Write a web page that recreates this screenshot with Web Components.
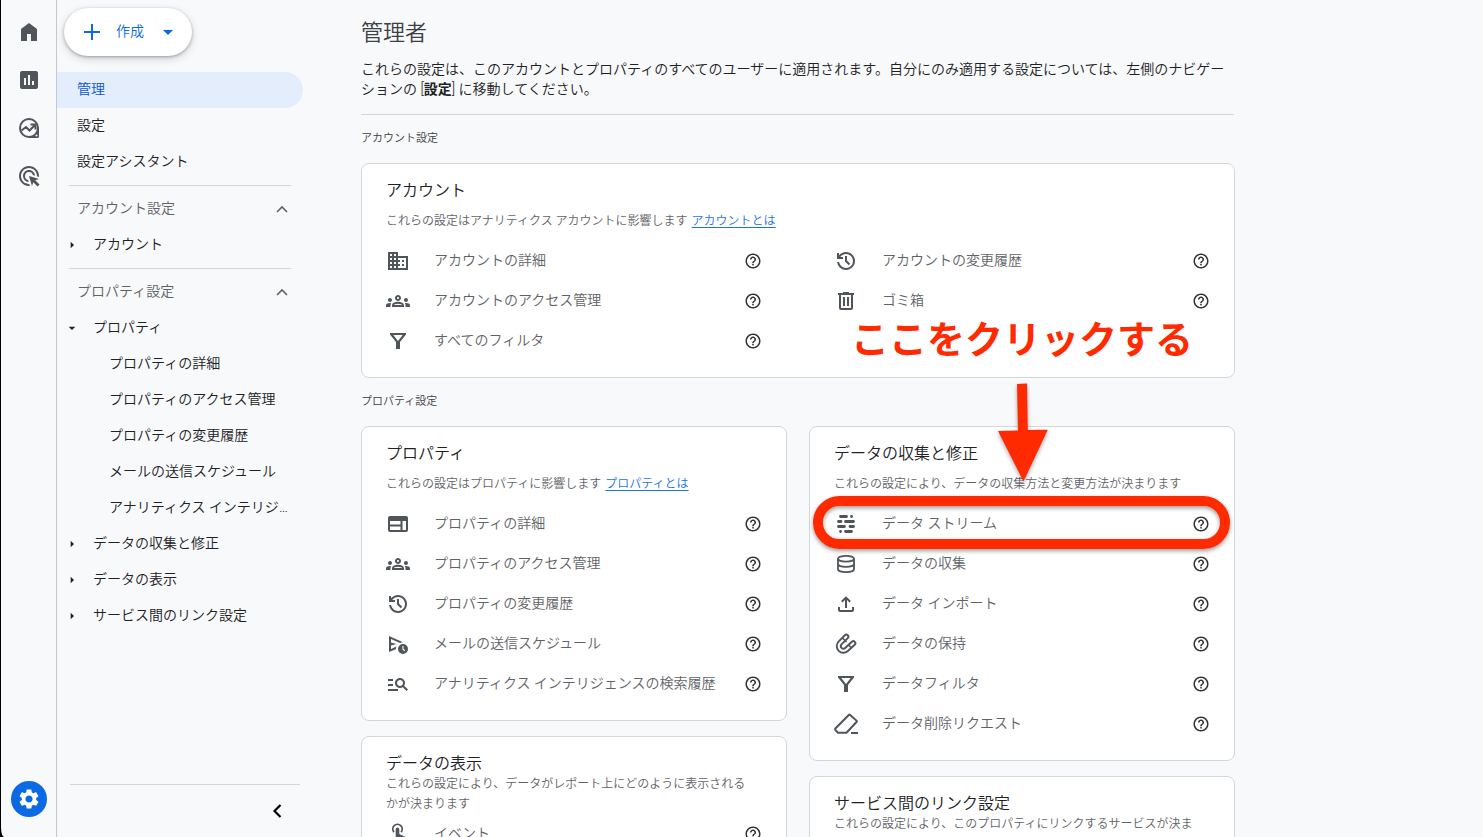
<!DOCTYPE html>
<html lang="ja">
<head>
<meta charset="utf-8">
<meta name="viewport" content="width=device-width, initial-scale=1">
<title>管理者</title>
<style>
  :root {
    --bg: #f8f9fb;
    --line: #d3d6da;
    --ink: #202124;
    --ink-2: #3c4043;
    --muted: #5f6368;
    --icon: #50555b;
    --blue: #1a73e8;
    --blue-strong: #0b6ae3;
    --red: #ff2a00;
  }
  html, body { height: 100%; margin: 0; }
  body {
    background: #000;
    color: var(--ink-2);
    font: 350 14px/20px Roboto, "Noto Sans CJK JP", sans-serif;
    overflow: hidden;
  }
</style>
</head>
<body>
<analytics-shell>
  <icon-rail slot="rail"></icon-rail>

  <side-nav slot="nav">
    <nav-item current>管理</nav-item>
    <nav-item>設定</nav-item>
    <nav-item>設定アシスタント</nav-item>
    <nav-group label="アカウント設定">
      <nav-item branch="closed">アカウント</nav-item>
    </nav-group>
    <nav-group label="プロパティ設定">
      <nav-item branch="open">プロパティ</nav-item>
      <nav-item nested>プロパティの詳細</nav-item>
      <nav-item nested>プロパティのアクセス管理</nav-item>
      <nav-item nested>プロパティの変更履歴</nav-item>
      <nav-item nested>メールの送信スケジュール</nav-item>
      <nav-item nested>アナリティクス インテリジェンスの検索履歴</nav-item>
      <nav-item branch="closed">データの収集と修正</nav-item>
      <nav-item branch="closed">データの表示</nav-item>
      <nav-item branch="closed">サービス間のリンク設定</nav-item>
    </nav-group>
  </side-nav>

  <admin-page>
    <page-header slot="header" heading="管理者">これらの設定は、このアカウントとプロパティのすべてのユーザーに適用されます。自分にのみ適用する設定については、左側のナビゲーションの [<b>設定</b>] に移動してください。</page-header>

    <settings-card slot="account" heading="アカウント" columns="2">
      <span slot="about">これらの設定はアナリティクス アカウントに影響します</span>
      <text-link slot="about">アカウントとは</text-link>
      <setting-row icon="domain">アカウントの詳細</setting-row>
      <setting-row icon="groups">アカウントのアクセス管理</setting-row>
      <setting-row icon="filter">すべてのフィルタ</setting-row>
      <setting-row icon="history">アカウントの変更履歴</setting-row>
      <setting-row icon="trash">ゴミ箱</setting-row>
    </settings-card>

    <settings-card slot="left" heading="プロパティ">
      <span slot="about">これらの設定はプロパティに影響します</span>
      <text-link slot="about">プロパティとは</text-link>
      <setting-row icon="web">プロパティの詳細</setting-row>
      <setting-row icon="groups">プロパティのアクセス管理</setting-row>
      <setting-row icon="history">プロパティの変更履歴</setting-row>
      <setting-row icon="schedule">メールの送信スケジュール</setting-row>
      <setting-row icon="search">アナリティクス インテリジェンスの検索履歴</setting-row>
    </settings-card>
    <settings-card slot="left" heading="データの表示">
      <span slot="about">これらの設定により、データがレポート上にどのように表示されるかが決まります</span>
      <setting-row icon="touch">イベント</setting-row>
    </settings-card>

    <settings-card slot="right" heading="データの収集と修正">
      <span slot="about">これらの設定により、データの収集方法と変更方法が決まります</span>
      <setting-row icon="stream" marked>データ ストリーム</setting-row>
      <setting-row icon="database">データの収集</setting-row>
      <setting-row icon="upload">データ インポート</setting-row>
      <setting-row icon="magnet">データの保持</setting-row>
      <setting-row icon="filter">データフィルタ</setting-row>
      <setting-row icon="eraser">データ削除リクエスト</setting-row>
    </settings-card>
    <settings-card slot="right" heading="サービス間のリンク設定">
      <span slot="about">これらの設定により、このプロパティにリンクするサービスが決まります</span>
    </settings-card>

    <callout-note slot="note">ここをクリックする</callout-note>
  </admin-page>
</analytics-shell>

<script>
const ICONS = {
  home: '<path d="M4 21V9l8-6 8 6v12h-6v-7h-4v7z"/>',
  chart: '<path d="M19 3H5c-1.1 0-2 .9-2 2v14c0 1.1.9 2 2 2h14c1.1 0 2-.9 2-2V5c0-1.1-.9-2-2-2zM9 17H7v-7h2v7zm4 0h-2V7h2v10zm4 0h-2v-4h2v4z"/>',
  explore: '<path fill-rule="evenodd" d="M12 2a10 10 0 1 0 0 20h8.500a1.500 1.500 0 0 0 1.500-1.500V12A10 10 0 0 0 12 2zm0 2a8 8 0 1 1 0 16 8 8 0 0 1 0-16zm7.500 14.500a1 1 0 1 1 0 2 1 1 0 0 1 0-2z"/><path d="M4.500 14.500l4.500-3.500 3.500 3.500 5-5M13.500 8.500h5v5" fill="none" stroke="currentColor" stroke-width="2"/>',
  ads: '<path d="M11.710 17.990A5.993 5.993 0 0 1 6 12c0-3.310 2.690-6 6-6 3.220 0 5.840 2.530 5.990 5.710l-2.100-.63a3.999 3.999 0 1 0-4.810 4.810l.63 2.100zM22 12c0 .3-.01.6-.04.9l-1.970-.59c.01-.1.01-.21.01-.31 0-4.420-3.580-8-8-8s-8 3.580-8 8 3.580 8 8 8c.1 0 .21 0 .31-.01l.59 1.970c-.3.03-.6.04-.9.04-5.520 0-10-4.480-10-10S6.480 2 12 2s10 4.480 10 10zm-3.770 4.260L22 15l-10-3 3 10 1.260-3.770 4.270 4.270 1.980-1.980-4.280-4.260z"/>',
  gear: '<path d="M19.140 12.940c.04-.3.06-.61.06-.94 0-.32-.02-.64-.07-.94l2.030-1.580c.18-.14.23-.41.12-.61l-1.920-3.320c-.12-.22-.37-.29-.59-.22l-2.390.96c-.5-.38-1.030-.7-1.620-.94l-.36-2.540c-.04-.24-.24-.41-.48-.41h-3.840c-.24 0-.43.17-.47.41l-.36 2.540c-.59.24-1.130.57-1.620.94l-2.390-.96c-.22-.08-.47 0-.59.22L2.740 8.870c-.12.21-.08.47.12.61l2.030 1.580c-.05.3-.09.63-.09.94s.02.64.07.94l-2.030 1.580c-.18.14-.23.41-.12.61l1.920 3.320c.12.22.37.29.59.22l2.390-.96c.5.38 1.030.7 1.620.94l.36 2.540c.05.24.24.41.48.41h3.840c.24 0 .44-.17.47-.41l.36-2.540c.59-.24 1.130-.56 1.620-.94l2.390.96c.22.08.47 0 .59-.22l1.920-3.320c.12-.22.07-.47-.12-.61l-2.010-1.580zM12 15.600c-1.980 0-3.600-1.620-3.600-3.600s1.620-3.600 3.600-3.600 3.600 1.620 3.600 3.600-1.620 3.600-3.600 3.600z"/>',
  plus: '<path d="M4 11h7V4h2v7h7v2h-7v7h-2v-7H4z"/>',
  caret: '<path d="M7 10l5 5 5-5z"/>',
  up: '<path d="M7 15l5-5 5 5" fill="none" stroke="currentColor" stroke-width="1.600"/>',
  back: '<path d="M15.500 6l-6 6 6 6" fill="none" stroke="currentColor" stroke-width="2.200"/>',
  help: '<path d="M11 18h2v-2h-2v2zm1-16C6.480 2 2 6.480 2 12s4.480 10 10 10 10-4.480 10-10S17.520 2 12 2zm0 18c-4.410 0-8-3.590-8-8s3.590-8 8-8 8 3.590 8 8-3.590 8-8 8zm0-14c-2.210 0-4 1.790-4 4h2c0-1.100.9-2 2-2s2 .9 2 2c0 2-3 1.750-3 5h2c0-2.250 3-2.500 3-5 0-2.210-1.790-4-4-4z"/>',
  domain: '<path d="M12 7V3H2v18h20V7H12zM6 19H4v-2h2v2zm0-4H4v-2h2v2zm0-4H4V9h2v2zm0-4H4V5h2v2zm4 12H8v-2h2v2zm0-4H8v-2h2v2zm0-4H8V9h2v2zm0-4H8V5h2v2zm10 12h-8v-2h2v-2h-2v-2h2v-2h-2V9h8v10zm-2-8h-2v2h2v-2zm0 4h-2v2h2v-2z"/>',
  groups: '<path d="M4 13c1.100 0 2-.9 2-2s-.9-2-2-2-2 .9-2 2 .9 2 2 2zm1.130 1.100c-.37-.06-.74-.1-1.130-.1-.99 0-1.930.21-2.780.58A2.010 2.010 0 0 0 0 16.430V18h4.500v-1.610c0-.83.23-1.610.63-2.290zM20 13c1.100 0 2-.9 2-2s-.9-2-2-2-2 .9-2 2 .9 2 2 2zm4 3.430c0-.81-.48-1.530-1.220-1.850A6.950 6.950 0 0 0 20 14c-.39 0-.76.04-1.130.1.4.68.63 1.460.63 2.290V18H24v-1.570zm-7.760-2.780c-1.170-.52-2.610-.9-4.240-.9s-3.070.39-4.240.9A2.988 2.988 0 0 0 6 16.390V18h12v-1.610c0-1.180-.68-2.260-1.760-2.740zM8.070 16c.09-.23.13-.39.91-.69.97-.38 1.990-.56 3.020-.56s2.050.18 3.020.56c.77.3.81.46.91.69H8.070zM12 8c.55 0 1 .45 1 1s-.45 1-1 1-1-.45-1-1 .45-1 1-1m0-2c-1.660 0-3 1.340-3 3s1.340 3 3 3 3-1.340 3-3-1.340-3-3-3z"/>',
  filter: '<path fill-rule="evenodd" d="M4 4h16v1.500L14 13v7h-4v-7L4 5.500zM7.300 6L12 11.900 16.700 6z"/>',
  history: '<path d="M12 21q-3.450 0-6.012-2.287T3.050 13H5.100q.35 2.600 2.313 4.300T12 19q2.925 0 4.963-2.037T19 12t-2.037-4.962T12 5q-1.725 0-3.225.8T6.250 8H9v2H3V4h2v2.350q1.275-1.600 3.113-2.475T12 3q1.875 0 3.513.713t2.850 1.924 1.925 2.850T21 12t-.712 3.513-1.925 2.850-2.850 1.925T12 21m2.800-4.800L11 12.400V7h2v4.600l3.200 3.200z"/>',
  trash: '<path fill-rule="evenodd" d="M4 4h5V3h6v1h5v2h-1v13a2 2 0 0 1-2 2H7a2 2 0 0 1-2-2V6H4zm3 2v13h10V6zm2 2h2v9H9zm4 0h2v9h-2z"/>',
  web: '<path fill-rule="evenodd" d="M4 4h16a2 2 0 0 1 2 2v12a2 2 0 0 1-2 2H4a2 2 0 0 1-2-2V6a2 2 0 0 1 2-2zm0 5v3.500h10.500V9zm0 5.500V18h10.500v-3.500zM16.500 9v9H20V9z"/>',
  schedule: '<path fill-rule="evenodd" d="M3 4l14 6.200a7 7 0 0 0-3 .9L5 7v3.500L10.500 12 5 13.500V17l5.500-2.400a7 7 0 0 0-.7 2.600L3 20z"/><path fill-rule="evenodd" d="M17 12a5 5 0 1 1 0 10 5 5 0 0 1 0-10zm-.6 2v3.300l2 2 .8-.8-1.700-1.700V14z"/>',
  search: '<path d="M7 9H2V7h5v2zm0 3H2v2h5v-2zm13.590 7l-3.830-3.830c-.8.52-1.740.83-2.760.83-2.760 0-5-2.240-5-5s2.240-5 5-5 5 2.240 5 5c0 1.020-.31 1.960-.83 2.750L22 17.590 20.590 19zM17 11c0-1.650-1.350-3-3-3s-3 1.350-3 3 1.350 3 3 3 3-1.350 3-3zM2 19h10v-2H2v2z"/>',
  touch: '<path d="M8 10.200a4.700 4.700 0 1 1 7 0" fill="none" stroke="currentColor" stroke-width="1.800"/><path d="M9.700 7.200a1.800 1.800 0 0 1 3.600 0V12l5.700 2.800-1 7.200h-7L5 16.500 6.500 15l3.200 1z"/>',
  stream: '<path d="M6.500 4.500h6M17.500 4.500h.1M4.500 9.500h2.500M11.500 9.500h8M4.500 14.500h6M16 14.500h3.500M6.500 19.500h.1M11.500 19.500h6" fill="none" stroke="currentColor" stroke-width="2.800" stroke-linecap="round"/>',
  database: '<g fill="none" stroke="currentColor" stroke-width="1.800"><ellipse cx="12" cy="6.700" rx="8" ry="2.900"/><path d="M4 6.700v10.600c0 1.600 3.600 2.900 8 2.900s8-1.300 8-2.900V6.700M4 12c0 1.600 3.600 2.900 8 2.900s8-1.300 8-2.900"/></g>',
  upload: '<path d="M12 16V6M7.800 9.800L12 5.600l4.200 4.200M5 15v3a1 1 0 0 0 1 1h12a1 1 0 0 0 1-1v-3" fill="none" stroke="currentColor" stroke-width="2"/>',
  magnet: '<g fill="none" stroke-linejoin="round"><path d="M12.300 4.700L6 11a4.600 4.600 0 0 0 6.500 6.500l6.800-6.300" stroke="currentColor" stroke-width="6" stroke-linecap="round"/><path d="M12.300 4.700L6 11a4.600 4.600 0 0 0 6.500 6.500l6.800-6.300" stroke="#fff" stroke-width="2.200" stroke-linecap="round"/><path d="M8.500 6l4 4M14.500 13l3 3" stroke="currentColor" stroke-width="1.600"/></g>',
  eraser: '<path d="M14.800 3L1.600 16.200a1.500 1.500 0 0 0 0 2L4 20.700h8.500L22.500 10a1 1 0 0 0 0-1.400L16.200 3a1 1 0 0 0-1.400 0zM17 21h7" fill="none" stroke="currentColor" stroke-width="2"/>'
};
const svg = (name, size = 24) =>
  `<svg viewBox="0 0 24 24" width="${size}" height="${size}" fill="currentColor" aria-hidden="true">${ICONS[name]}</svg>`;

const BASE = `
  :host, * { box-sizing: border-box; }
  svg { display: block; flex: none; }
  button { border: 0; padding: 0; margin: 0; background: none; font: inherit; color: inherit; cursor: pointer; }
  a { color: inherit; text-decoration: none; }
`;
function define(name, render) {
  customElements.define(name, class extends HTMLElement {
    constructor() {
      super();
      this.attachShadow({ mode: "open" });
    }
    connectedCallback() {
      const t = document.createElement("template");
      const { css, html } = render(this);
      t.innerHTML = `<style>${BASE}${css}</style>${html}`;
      this.shadowRoot.replaceChildren(t.content.cloneNode(true));
    }
  });
}

define("analytics-shell", () => ({
  css: `
    :host { display: flex; height: 100vh; margin-left: 1px; background: var(--bg); border-bottom-left-radius: 3px 10px; overflow: hidden; }
    main { flex: 1; min-width: 0; overflow-y: auto; scrollbar-width: none; }
  `,
  html: `<slot name="rail"></slot><slot name="nav"></slot><main><slot></slot></main>`
}));

define("icon-rail", () => ({
  css: `
    :host { display: flex; flex: none; width: 56px; border-right: 1px solid #c6c9cc; color: var(--icon); }
    nav { flex: 1; display: flex; flex-direction: column; align-items: center; gap: 24px; padding: 20px 0 20px 1px; }
    .gear { display: grid; place-items: center; width: 36px; height: 36px; margin-top: auto; border-radius: 50%; background: var(--blue-strong); color: #fff; }
  `,
  html: `<nav aria-label="メイン">
    <a href="#home" aria-label="ホーム">${svg("home")}</a>
    <a href="#reports" aria-label="レポート">${svg("chart")}</a>
    <a href="#explore" aria-label="探索">${svg("explore")}</a>
    <a href="#ads" aria-label="広告">${svg("ads")}</a>
    <a class="gear" href="#admin" aria-label="管理">${svg("gear")}</a>
  </nav>`
}));

define("side-nav", () => ({
  css: `
    :host { display: flex; flex-direction: column; flex: none; width: 246px; padding-top: 8px; }
    .create { display: flex; align-items: center; width: 128px; height: 48px; margin: 0 0 16px 7px; padding: 0 12px 0 16px; border-radius: 24px; background: #fff; color: var(--blue-strong); box-shadow: 0 1px 3px rgba(60,64,67,.4), 0 3px 8px rgba(60,64,67,.2); }
    .create span { margin: 0 12px; padding-bottom: 2px; }
    footer { display: flex; justify-content: flex-end; margin: auto 3px 0 13px; padding: 14px 11px 14px 0; border-top: 1px solid var(--line); color: #000; }
  `,
  html: `<button class="create">${svg("plus")}<span>作成</span>${svg("caret")}</button>
    <nav aria-label="管理メニュー"><slot></slot></nav>
    <footer><button aria-label="折りたたむ">${svg("back")}</button></footer>`
}));

define("nav-group", el => ({
  css: `
    :host { display: block; }
    :host::before { content: ""; display: block; height: 1px; margin: 5px 12px; background: var(--line); }
    button { display: flex; align-items: center; justify-content: space-between; width: 100%; height: 36px; padding: 0 9px 0 20px; color: var(--muted); }
    span { padding-bottom: 2px; }
  `,
  html: `<button aria-expanded="true"><span>${el.getAttribute("label")}</span>${svg("up")}</button><slot></slot>`
}));

define("nav-item", el => ({
  css: `
    :host { display: block; color: var(--ink); }
    a { display: flex; align-items: center; height: 36px; padding: 0 11px 0 20px; }
    span { padding-bottom: 2px; overflow: hidden; white-space: nowrap; text-overflow: ellipsis; }
    :host([current]) a { background: #e4edfc; color: #0b57d0; border-radius: 0 18px 18px 0; }
    :host([branch]) a { padding-left: 7px; gap: 13px; }
    :host([branch="closed"]) svg { transform: rotate(-90deg); }
    :host([nested]) a { padding-left: 52px; }
  `,
  html: `<a href="#item">${el.hasAttribute("branch") ? svg("caret", 16) : ""}<span><slot></slot></span></a>`
}));

define("admin-page", () => ({
  css: `
    :host { display: block; position: relative; max-width: 932px; padding-left: 58px; }
    h2 { margin: 0; padding: 16px 0; font-size: 11px; line-height: 16px; font-weight: inherit; }
    .columns { display: grid; grid-template-columns: 1fr 1fr; gap: 22px; align-items: start; padding-bottom: 24px; }
    .columns > div { display: grid; gap: 15px; }
  `,
  html: `<slot name="header"></slot>
    <h2>アカウント設定</h2>
    <slot name="account"></slot>
    <h2>プロパティ設定</h2>
    <div class="columns"><div><slot name="left"></slot></div><div><slot name="right"></slot></div></div>
    <slot name="note"></slot>`
}));

define("page-header", el => ({
  css: `
    :host { display: block; padding: 18px 0 15px; margin-right: 1px; border-bottom: 1px solid var(--line); }
    h1 { margin: 0 0 11px; font-size: 22px; line-height: 30px; font-weight: inherit; }
    p { margin: 0; color: var(--ink); line-break: loose; }
  `,
  html: `<h1>${el.getAttribute("heading")}</h1><p><slot></slot></p>`
}));

define("settings-card", el => ({
  css: `
    :host { display: block; padding: 17px 24px 16px; border: 1px solid var(--line); border-radius: 8px; background: #fff; }
    h3 { margin: 0; color: var(--ink); font-size: 16px; line-height: 20px; font-weight: inherit; }
    .about { display: flex; align-items: center; min-height: 40px; padding-right: 6px; color: var(--muted); font-size: 12px; }
    p { margin: 0; }
    :host([columns]) .rows { display: grid; grid-auto-flow: column; grid-template: repeat(3, 40px) / 1fr 1fr; column-gap: 72px; }
  `,
  html: `<h3>${el.getAttribute("heading")}</h3><div class="about"><p><slot name="about"></slot></p></div><div class="rows"><slot></slot></div>`
}));

define("text-link", () => ({
  css: `
    :host { display: inline; margin-left: 4px; }
    a { color: var(--blue); text-decoration: underline; text-underline-offset: 2px; }
  `,
  html: `<a href="#about"><slot></slot></a>`
}));

define("setting-row", el => ({
  css: `
    :host { display: flex; align-items: center; height: 40px; position: relative; color: var(--muted); }
    a { flex: 1; display: flex; align-items: center; gap: 24px; min-width: 0; }
    span { padding-bottom: 2px; }
    svg { color: var(--icon); }
    button svg { color: #303236; }
    :host([marked])::after { content: ""; position: absolute; inset: -8px -20px -5px -21px; border: 10px solid var(--red); border-radius: 27px; box-shadow: 0 2px 4px rgba(0,0,0,.4), inset 0 2px 4px rgba(0,0,0,.4); pointer-events: none; }
  `,
  html: `<a href="#setting">${svg(el.getAttribute("icon"))}<span><slot></slot></span></a><button aria-label="ヘルプ">${svg("help", 18)}</button>`
}));

define("callout-note", () => ({
  css: `
    :host { position: absolute; top: 316px; right: 42px; display: flex; flex-direction: column; align-items: center; gap: 18px; color: var(--red); font-size: 38px; line-height: 48px; font-weight: 700; pointer-events: none; white-space: nowrap; }
    svg { overflow: visible; filter: drop-shadow(0 2px 2px rgba(0,0,0,.35)); }
  `,
  html: `<slot></slot><svg width="52" height="100" viewBox="0 0 52 100" aria-hidden="true"><path fill="currentColor" d="M21 2l10-.4.8 46.400 20-.3L27.500 99.500 2 49l20-.6z"/></svg>`
}));
</script>
</body>
</html>
